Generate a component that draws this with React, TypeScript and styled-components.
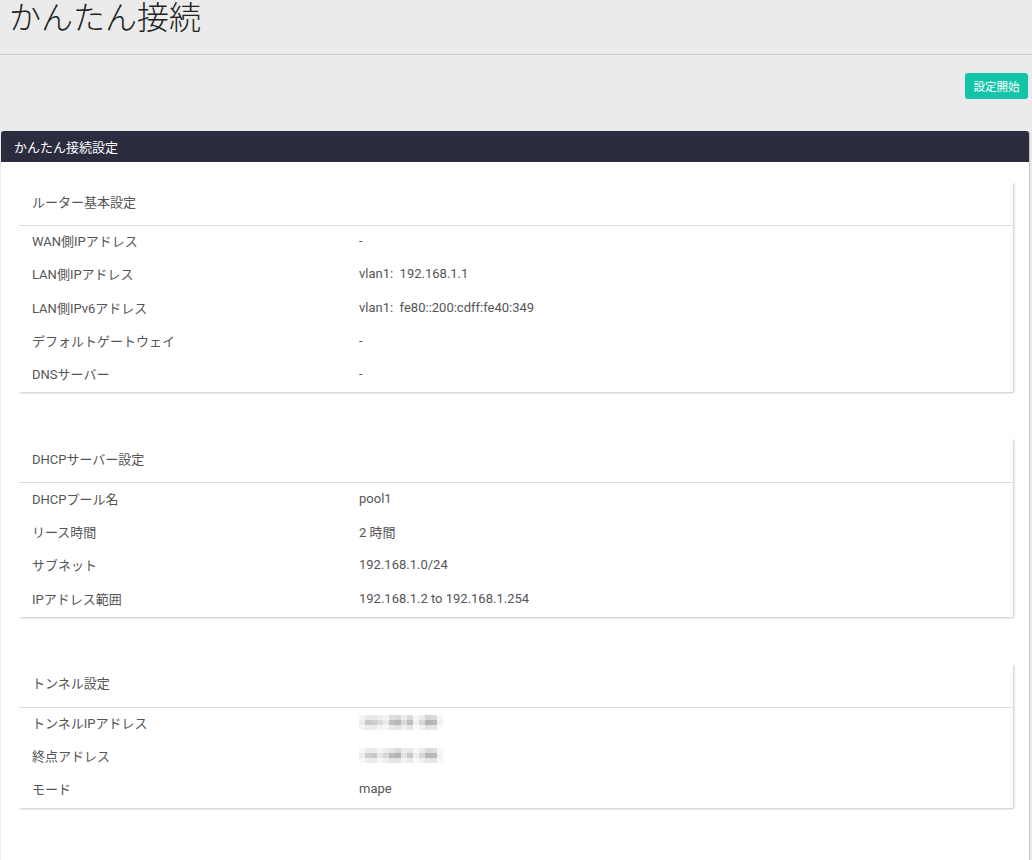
import React from 'react';
import styled, { createGlobalStyle } from 'styled-components';

const GlobalStyle = createGlobalStyle`
  html, body {
    margin: 0;
    padding: 0;
    background: #ebebeb;
    font-family: Roboto, "Noto Sans CJK JP", sans-serif;
  }
`;

const TitleBar = styled.div`
  height: 55px;
  border-bottom: 1px solid #cccccc;
  box-sizing: border-box;
  padding-left: 9px;
`;

const Title = styled.h1`
  margin: 0;
  font-size: 32px;
  font-weight: 300;
  line-height: 36px;
  color: #222;
`;

const Toolbar = styled.div`
  height: 76px;
  display: flex;
  justify-content: flex-end;
  align-items: flex-start;
  padding: 18px 4px 0 0;
  box-sizing: border-box;
`;

const StartButton = styled.button`
  width: 63px;
  height: 26px;
  border: none;
  border-radius: 3px;
  background: #13c4a9;
  color: #fff;
  font-family: Roboto, "Noto Sans CJK JP", sans-serif;
  font-size: 11.5px;
  padding: 0;
  cursor: pointer;
`;

const Panel = styled.section`
  margin: 0 3px 0 1px;
  min-height: 729px;
  background: #fff;
  border-radius: 3px 3px 0 0;
  box-shadow: 1px 0 1px rgba(0, 0, 0, 0.18);
  display: flex;
  flex-direction: column;
`;

const PanelHeader = styled.div`
  height: 31px;
  background: #2b2d3f;
  color: #fff;
  font-size: 13px;
  display: flex;
  align-items: center;
  padding-left: 13px;
  border-radius: 3px 3px 0 0;
`;

const PanelBody = styled.div`
  padding: 20px 16px 0 18px;
  display: flex;
  flex-direction: column;
  gap: 47px;
`;

const Card = styled.div`
  background: #fff;
  box-shadow: 1px 1px 2px rgba(0, 0, 0, 0.22);
`;

const CardHeader = styled.div`
  height: 44px;
  border-bottom: 1px solid #dddddd;
  box-sizing: border-box;
  display: flex;
  align-items: center;
  padding: 0 0 5px 13px;
  font-size: 13px;
  color: #555;
`;

const Row = styled.div`
  height: 33.3px;
  box-sizing: border-box;
  display: grid;
  grid-template-columns: 327px 1fr;
  align-items: center;
  padding: 0 0 4px 13px;
  font-size: 13px;
  color: #555;
`;

const Value = styled.span`
  color: #555;
`;

const Mosaic = styled.div`
  display: grid;
  grid-template-columns: repeat(14, 6px);
  grid-template-rows: repeat(3, 5px);
  width: 84px;
`;

const Cell = styled.span<{ $shade: number }>`
  background: ${(p) => `rgba(110, 110, 115, ${p.$shade})`};
`;

const shadesA = [
  0.08, 0.16, 0.16, 0.12, 0.08, 0.22, 0.26, 0.14, 0.26, 0.06, 0.14, 0.3, 0.26, 0.06,
  0.14, 0.38, 0.34, 0.24, 0.14, 0.44, 0.5, 0.26, 0.46, 0.1, 0.26, 0.52, 0.48, 0.1,
  0.06, 0.14, 0.14, 0.08, 0.06, 0.16, 0.2, 0.1, 0.18, 0.04, 0.1, 0.2, 0.18, 0.04,
];
const shadesB = [
  0.06, 0.14, 0.14, 0.08, 0.14, 0.18, 0.26, 0.14, 0.16, 0.06, 0.14, 0.26, 0.22, 0.05,
  0.14, 0.34, 0.38, 0.16, 0.28, 0.48, 0.52, 0.2, 0.38, 0.1, 0.28, 0.5, 0.48, 0.08,
  0.05, 0.14, 0.14, 0.06, 0.1, 0.18, 0.2, 0.08, 0.14, 0.04, 0.1, 0.18, 0.18, 0.04,
];

function Blurred({ shades }: { shades: number[] }) {
  return (
    <Mosaic>
      {shades.map((s, i) => (
        <Cell key={i} $shade={s} />
      ))}
    </Mosaic>
  );
}

type Item = { label: string; value: React.ReactNode };

const sections: { title: string; items: Item[] }[] = [
  {
    title: 'ルーター基本設定',
    items: [
      { label: 'WAN側IPアドレス', value: '-' },
      { label: 'LAN側IPアドレス', value: 'vlan1:\u00a0 192.168.1.1' },
      { label: 'LAN側IPv6アドレス', value: 'vlan1:\u00a0 fe80::200:cdff:fe40:349' },
      { label: 'デフォルトゲートウェイ', value: '-' },
      { label: 'DNSサーバー', value: '-' },
    ],
  },
  {
    title: 'DHCPサーバー設定',
    items: [
      { label: 'DHCPプール名', value: 'pool1' },
      { label: 'リース時間', value: '2 時間' },
      { label: 'サブネット', value: '192.168.1.0/24' },
      { label: 'IPアドレス範囲', value: '192.168.1.2 to 192.168.1.254' },
    ],
  },
  {
    title: 'トンネル設定',
    items: [
      { label: 'トンネルIPアドレス', value: <Blurred shades={shadesA} /> },
      { label: '終点アドレス', value: <Blurred shades={shadesB} /> },
      { label: 'モード', value: 'mape' },
    ],
  },
];

export default function App() {
  return (
    <>
      <GlobalStyle />
      <TitleBar>
        <Title>かんたん接続</Title>
      </TitleBar>
      <Toolbar>
        <StartButton>設定開始</StartButton>
      </Toolbar>
      <Panel>
        <PanelHeader>かんたん接続設定</PanelHeader>
        <PanelBody>
          {sections.map((s) => (
            <Card key={s.title}>
              <CardHeader>{s.title}</CardHeader>
              {s.items.map((it) => (
                <Row key={it.label}>
                  <span>{it.label}</span>
                  <Value>{it.value}</Value>
                </Row>
              ))}
            </Card>
          ))}
        </PanelBody>
      </Panel>
    </>
  );
}
